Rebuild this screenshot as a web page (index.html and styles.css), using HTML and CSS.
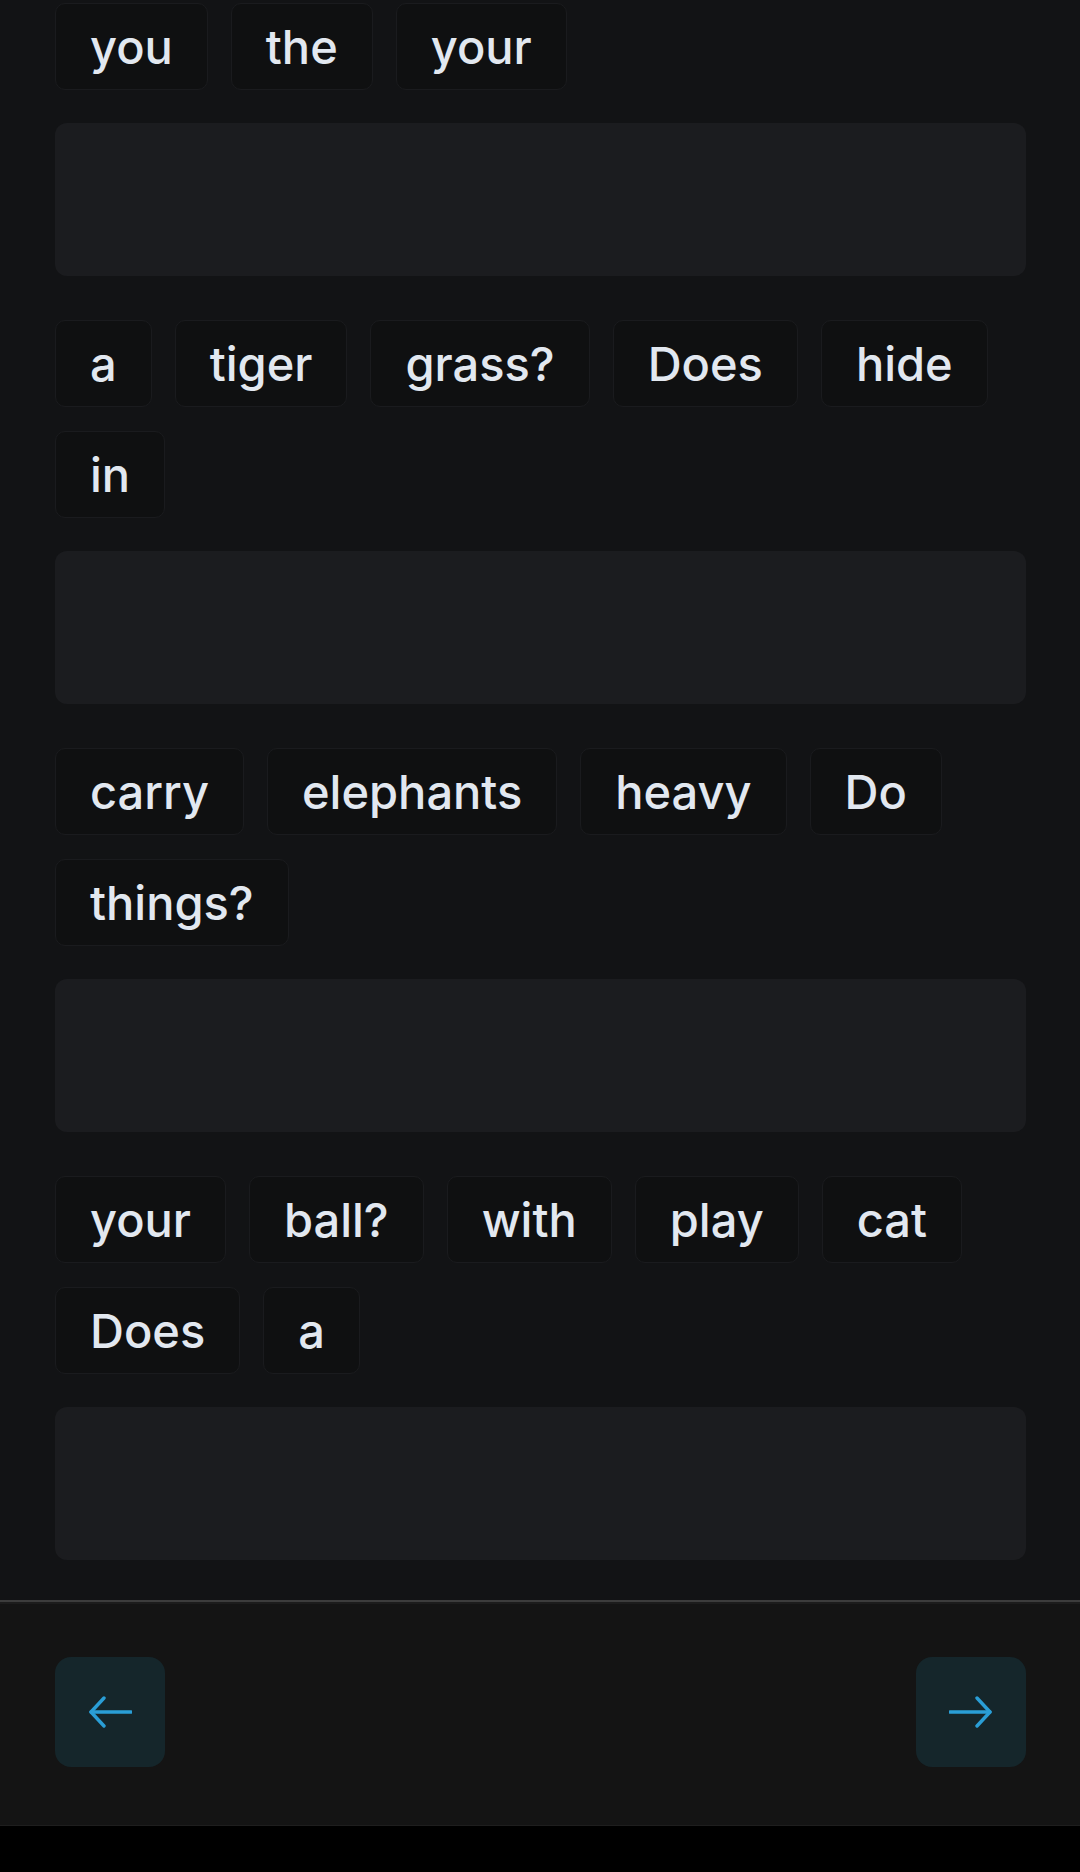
FILE: index.html
```html
<!DOCTYPE html>
<html lang="en">

<head>
  <meta charset="UTF-8" />
  <meta name="viewport" content="width=device-width, initial-scale=1.0">
  <title>Sentence Builder</title>
  <link rel="stylesheet" href="styles.css">
</head>

<body>
  <div class="screen">
    <main class="questions">
      <section class="question">
        <div class="word-bank">
          <span class="word">you</span>
          <span class="word">the</span>
          <span class="word">your</span>
        </div>
        <div class="answer-box"></div>
      </section>

      <section class="question">
        <div class="word-bank">
          <span class="word">a</span>
          <span class="word">tiger</span>
          <span class="word">grass?</span>
          <span class="word">Does</span>
          <span class="word">hide</span>
          <span class="word">in</span>
        </div>
        <div class="answer-box"></div>
      </section>

      <section class="question">
        <div class="word-bank">
          <span class="word">carry</span>
          <span class="word">elephants</span>
          <span class="word">heavy</span>
          <span class="word">Do</span>
          <span class="word">things?</span>
        </div>
        <div class="answer-box"></div>
      </section>

      <section class="question">
        <div class="word-bank">
          <span class="word">your</span>
          <span class="word">ball?</span>
          <span class="word">with</span>
          <span class="word">play</span>
          <span class="word">cat</span>
          <span class="word">Does</span>
          <span class="word">a</span>
        </div>
        <div class="answer-box"></div>
      </section>
    </main>

    <footer class="nav-bar">
      <button class="nav-button" aria-label="Previous">
        <svg width="44" height="32" viewBox="0 0 44 32" fill="none" stroke="currentColor" stroke-width="3.4"
          stroke-linecap="round" stroke-linejoin="round">
          <path d="M43 16H3" />
          <path d="M16 2L3 16L16 30" />
        </svg>
      </button>
      <button class="nav-button" aria-label="Next">
        <svg width="44" height="32" viewBox="0 0 44 32" fill="none" stroke="currentColor" stroke-width="3.4"
          stroke-linecap="round" stroke-linejoin="round">
          <path d="M1 16H41" />
          <path d="M28 2L41 16L28 30" />
        </svg>
      </button>
    </footer>
  </div>
</body>

</html>
```

FILE: styles.css
```css
body {
  margin: 0;
  padding: 0;
  background-color: #000;
  font-family: 'Inter', 'Roboto', sans-serif;
  color: #e2e8f0;
}

.screen {
  width: 1080px;
  height: 1826px;
  display: flex;
  flex-direction: column;
  background-color: #121315;
  border-bottom: 1px solid #1e1e1e;
  box-sizing: border-box;
  overflow: hidden;
}

.questions {
  flex: 1;
  padding: 3px 54px 0 55px;
}

.question {
  margin-bottom: 44px;
}

.question:last-child {
  margin-bottom: 0;
}

.word-bank {
  display: flex;
  flex-wrap: wrap;
  gap: 24px 23px;
  margin-bottom: 33px;
}

.word {
  display: inline-block;
  padding: 16px 34px;
  font-size: 47px;
  font-weight: 500;
  line-height: 53px;
  background-color: #0f1011;
  border: 1px solid #1a1b1e;
  border-radius: 10px;
}

.answer-box {
  height: 153px;
  background-color: #1b1c1f;
  border-radius: 12px;
}

.nav-bar {
  height: 225px;
  box-sizing: border-box;
  flex-shrink: 0;
  display: flex;
  justify-content: space-between;
  align-items: flex-start;
  padding: 55px 54px 0 55px;
  background-color: #141414;
  border-top: 2px solid #3c3c3c;
  box-shadow: inset 0 2px 0 #1c1c1c;
}

.nav-button {
  width: 110px;
  height: 110px;
  display: flex;
  align-items: center;
  justify-content: center;
  padding: 0;
  border: none;
  border-radius: 16px;
  background-color: #15262b;
  color: #2a9ed6;
  cursor: pointer;
}
```
